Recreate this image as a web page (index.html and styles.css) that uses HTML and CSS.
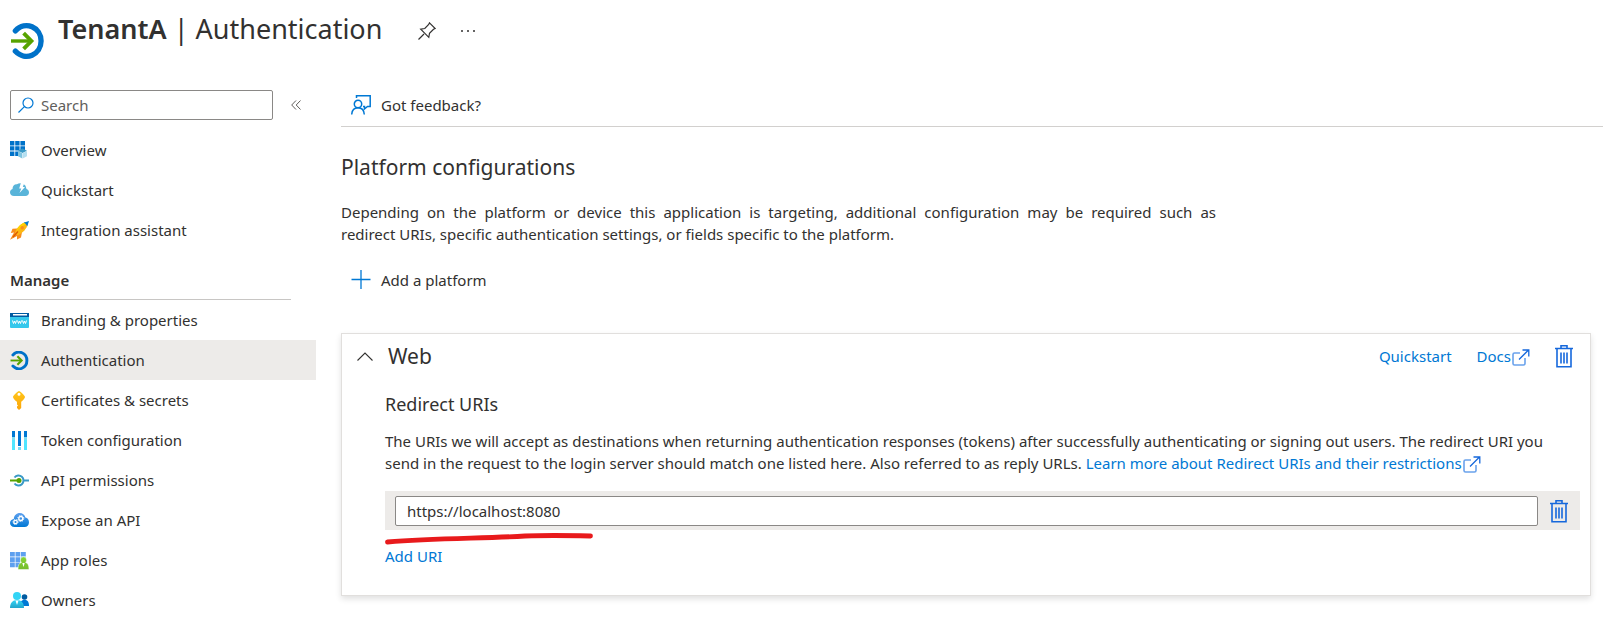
FILE: index.html
```html
<!DOCTYPE html>
<html lang="en">
<head>
<meta charset="utf-8">
<meta name="viewport" content="width=device-width, initial-scale=1">
<title>TenantA | Authentication</title>
<link rel="stylesheet" href="styles.css">
</head>
<body>
<svg class="defs" aria-hidden="true">
  <defs>
    <linearGradient id="cyan" x1="0" y1="0" x2="0" y2="1"><stop offset="0" stop-color="#32d4f5"/><stop offset="1" stop-color="#22a5cb"/></linearGradient>
    <linearGradient id="cloud" x1="0" y1="0" x2="0" y2="1"><stop offset="0" stop-color="#5ea0ef"/><stop offset="1" stop-color="#0078d4"/></linearGradient>
    <linearGradient id="gold" x1="0" y1="0" x2="0" y2="1"><stop offset="0" stop-color="#ffc61a"/><stop offset="1" stop-color="#fba40a"/></linearGradient>
    <linearGradient id="lime" x1="0" y1="0" x2="0" y2="1"><stop offset="0" stop-color="#86d633"/><stop offset="1" stop-color="#76bc2d"/></linearGradient>
    <symbol id="auth" viewBox="0 0 34 36">
      <path d="M4.500 7.500C15-3.500 31 4 31 18S15 39.500 4.500 28.500" fill="none" stroke="#0072c9" stroke-width="5.500" stroke-linecap="round"/>
      <path d="M0 18H20" stroke="#57a300" stroke-width="3.500" fill="none"/>
      <path d="M13 10L21 18L13 26" stroke="#57a300" stroke-width="4" fill="none"/>
    </symbol>
    <symbol id="trash" viewBox="0 0 18 23">
      <g fill="none" stroke="#1668dc" stroke-width="1.600">
        <path d="M0 3.500H18M6 3V.8H12V3M2 4V21.800H16V4M6 7.500V18.500M9 7.500V18.500M12 7.500V18.500"/>
      </g>
    </symbol>
    <symbol id="external" viewBox="0 0 18 17">
      <path d="M8 4H2.500Q1 4 1 5.500V14.500Q1 16 2.500 16H11.500Q13 16 13 14.500V9" fill="none" stroke="#6aa2ec" stroke-width="1.600"/>
      <path d="M7 10.500L16.500 1M10.500 1H16.800V7.500" fill="none" stroke="#1668dc" stroke-width="1.300"/>
    </symbol>
  </defs>
</svg>

<header class="page-header">
  <svg class="page-icon" aria-hidden="true"><use href="#auth"/></svg>
  <h1 class="page-title"><strong>TenantA</strong> | Authentication</h1>
  <button class="icon-button pin" aria-label="Pin">
    <svg width="18" height="18" viewBox="0 0 18 18" fill="none" stroke="#323130" stroke-width="1.200" aria-hidden="true"><path d="M.5 17.500L6 12M11.500.8L17.200 6.500L15.500 7.300L11.500 11.200L10.800 15.300L2.700 7.200L6.800 6.500L10.700 2.500Z"/></svg>
  </button>
  <button class="icon-button" aria-label="More">
    <svg width="14" height="4" viewBox="0 0 14 4" fill="#323130" aria-hidden="true"><circle cx="1" cy="2" r="1"/><circle cx="7" cy="2" r="1"/><circle cx="13" cy="2" r="1"/></svg>
  </button>
</header>

<div class="layout">
  <aside class="sidebar">
    <div class="search-row">
      <label class="search">
        <svg width="16" height="16" viewBox="0 0 16 16" fill="none" stroke="#0078d4" stroke-width="1.200" aria-hidden="true"><circle cx="10" cy="6" r="5"/><path d="M6.400 9.600L.5 15.500"/></svg>
        <input class="search-input" type="search" placeholder="Search" aria-label="Search">
      </label>
      <button class="icon-button" aria-label="Collapse menu">
        <svg width="10" height="10" viewBox="0 0 10 10" fill="none" stroke="#605e5c" aria-hidden="true"><path d="M5 .5L.7 5L5 9.500M9.500.5L5.200 5L9.500 9.500"/></svg>
      </button>
    </div>
    <nav aria-label="Application">
      <a class="nav-item" href="#overview">
        <svg class="nav-icon" viewBox="0 0 19 19" aria-hidden="true"><path fill="#0072c9" d="M0 0h4.400v4.400H0zM5.200 0h4.400v4.400H5.200zM10.400 0H15v4.400h-4.600zM0 5.200h4.400v4.400H0zM5.200 5.200h4.400v4.400H5.200zM10.400 5.200H15v4.400h-4.600zM0 10.400h4.400V15H0zM5.200 10.400h4.400V15H5.200z"/><path fill="#3999c6" d="M12.500 7.500L17 9.800L12.500 12L8 9.800Z"/><path fill="#7fc4e0" d="M8 10L12.300 12.200V17.500L8 15.300Z"/><path fill="#b5dff0" d="M17 10L12.700 12.200V17.500L17 15.300Z"/></svg>
        Overview
      </a>
      <a class="nav-item" href="#quickstart">
        <svg class="nav-icon" viewBox="0 0 19 19" aria-hidden="true"><path fill="#59b4d9" d="M4 15C1.500 15 0 13.500 0 11.300C0 9.500 1 8.300 2.500 7.900C2.500 4.500 4.500 3 7 3.200C9 1.500 13.500 1.700 15.500 4.800L16.500 8C18 8.500 19 9.700 19 11.500C19 13.500 17.500 15 15.500 15Z"/><path fill="#fff" d="M11 1.500H14.500L12.800 6H15L9.500 12L11.300 7.500H9.200Z"/></svg>
        Quickstart
      </a>
      <a class="nav-item" href="#integration">
        <svg class="nav-icon" viewBox="0 0 19 19" aria-hidden="true"><path fill="#f78d1e" d="M7 7.500L2.500 7.800L.8 12L4 11.500L0 18.800L7 15L7 18.500L11 16.500L12 11Z"/><path fill="#fcb813" d="M5 11.500C7 6 11 2.500 16 1L18 3C16.500 8 13 12 7.500 14.500Z"/><path fill="#ffd400" d="M6 10C8 5.500 11 3 15.500 1L16.500 2.300Z"/><path fill="#0078d4" d="M13.500 1.800L19 0L17.200 5.500C16.500 3.500 15.500 2.500 13.500 1.800Z"/><path d="M3 16L8 10.500" stroke="#dd5900" stroke-width="1.200"/><circle cx="12.200" cy="6.800" r="1.700" fill="#f78d1e"/></svg>
        Integration assistant
      </a>
      <h2 class="nav-heading">Manage</h2>
      <a class="nav-item" href="#branding">
        <svg class="nav-icon" viewBox="0 0 19 19" aria-hidden="true"><rect y="2" width="19" height="15" rx="1" fill="#35c8ec"/><path fill="#005ba1" d="M0 2H19V6H0Z"/><path fill="#fff" d="M3 3H17V4.500H3Z"/><path fill="none" stroke="#fff" d="M2.500 9.500L3.500 12.500L4.500 10L5.500 12.500L6.500 9.500M7.500 9.500L8.500 12.500L9.500 10L10.500 12.500L11.500 9.500M12.500 9.500L13.500 12.500L14.500 10L15.500 12.500L16.500 9.500"/></svg>
        Branding &amp; properties
      </a>
      <a class="nav-item nav-item--active" href="#authentication" aria-current="page">
        <svg class="nav-icon" aria-hidden="true"><use href="#auth"/></svg>
        Authentication
      </a>
      <a class="nav-item" href="#certificates">
        <svg class="nav-icon" viewBox="0 0 19 19" aria-hidden="true"><path fill="url(#gold)" fill-rule="evenodd" d="M9 0C10 0 15 4.500 15 6C15 7.500 12 10.500 11.200 10.700V17L9 19L7 17V15.500L8 14.500L7 13.500V10.700C6 10.500 3 7.500 3 6C3 4.500 8 0 9 0ZM9 1.800A1.500 1.500 0 1 0 9 4.800A1.500 1.500 0 1 0 9 1.800Z"/></svg>
        Certificates &amp; secrets
      </a>
      <a class="nav-item" href="#token">
        <svg class="nav-icon" viewBox="0 0 19 19" aria-hidden="true"><path fill="#0078d4" d="M2 0H5V6H2zM8 0H11V15H8zM14 0H17V6H14z"/><path fill="#7adcf5" d="M2 6H5V9H2zM14 6H17V9H14zM8 16H11V19H8z"/><path fill="#50e6ff" d="M2 9H5V19H2zM14 9H17V19H14z"/></svg>
        Token configuration
      </a>
      <a class="nav-item" href="#permissions">
        <svg class="nav-icon" viewBox="0 0 19 19" aria-hidden="true"><path d="M4.500 6.500A5 5 0 1 1 4.500 12.500M14 9.500H19" fill="none" stroke="#3999c6" stroke-width="2"/><path d="M0 9.500H8" stroke="#57a300" stroke-width="2"/><circle cx="9" cy="9.500" r="2.500" fill="#57a300"/></svg>
        API permissions
      </a>
      <a class="nav-item" href="#expose">
        <svg class="nav-icon" viewBox="0 0 19 19" aria-hidden="true"><path fill="url(#cloud)" d="M4.500 16C1.800 16 0 14.300 0 12C0 9.800 1.600 8.200 3.800 8C4 4.500 6.500 2 9.800 2C12.500 2 14.600 3.600 15.400 6.500C17.600 6.900 19 8.800 19 11.200C19 14 17.200 16 14.500 16Z"/><g fill="none" stroke="#fff"><circle cx="5.500" cy="11" r="1.700" stroke-width="1.300"/><circle cx="5.500" cy="11" r="2.500" stroke-dasharray="1 1"/><circle cx="10.800" cy="7.500" r="2" stroke-width="1.400"/><circle cx="10.800" cy="7.500" r="3" stroke-dasharray="1.200 1.200"/></g></svg>
        Expose an API
      </a>
      <a class="nav-item" href="#roles">
        <svg class="nav-icon" viewBox="0 0 19 19" aria-hidden="true"><path fill="#5ea0ef" d="M0 1h4.800v4.600H0zM5.500 1h4.800v4.600H5.500zM11 1h4.800v4.600H11zM0 6.300h4.800v4.600H0zM5.500 6.300h4.800v4.600H5.500zM11 6.300h4.800v4.600H11zM0 11.600h4.800v4.600H0zM5.500 11.600h4.800v4.600H5.500z"/><path fill="url(#lime)" stroke="#fff" stroke-width=".5" d="M13.500 5.800A3.300 3.300 0 0 1 15.600 11.500C18 12 19 14.500 19 18.500H8C8 14.500 9 12 11.400 11.500A3.300 3.300 0 0 1 13.500 5.800Z"/><path fill="#fff" d="M12.300 12H14.700L13.500 16Z"/></svg>
        App roles
      </a>
      <a class="nav-item" href="#owners">
        <svg class="nav-icon" viewBox="0 0 19 19" aria-hidden="true"><circle cx="14.500" cy="6" r="2.800" fill="#005ba1"/><path fill="#0078d4" d="M10 15C10 11 11.500 8.800 14.500 8.800S19 11 19 15Z"/><circle cx="7" cy="5" r="4" fill="#32d4f5"/><path fill="url(#cyan)" d="M0 17C0 12 2.500 9 7 9S14 12 14 17Z"/><path fill="#fff" d="M5.500 9.500H8.500L7 14Z"/></svg>
        Owners
      </a>
    </nav>
  </aside>

  <main class="main">
    <div class="toolbar">
      <button class="command">
        <svg width="20" height="20" viewBox="0 0 20 20" fill="none" stroke="#0078d4" stroke-width="1.500" aria-hidden="true"><circle cx="7" cy="9" r="3.700"/><path d="M.7 19.500C1 15 3.500 12.800 7 12.800S13 15 13.300 19.500M5.500 3V.8H19.200V11.500H16.500L13.500 14V11.500H12"/></svg>
        Got feedback?
      </button>
    </div>

    <h2 class="section-title">Platform configurations</h2>
    <p class="intro">Depending on the platform or device this application is targeting, additional configuration may be required such as redirect&nbsp;URIs, specific authentication settings, or fields specific to the platform.</p>
    <button class="command">
      <svg width="20" height="20" viewBox="0 0 20 20" stroke="#0078d4" stroke-width="1.300" aria-hidden="true"><path d="M.5 9.500H19.500M10 0V19"/></svg>
      Add a platform
    </button>

    <section class="card">
      <div class="card-header">
        <button class="icon-button" aria-label="Collapse Web">
          <svg width="16" height="9" viewBox="0 0 16 9" fill="none" stroke="#323130" stroke-width="1.100" aria-hidden="true"><path d="M.5 8.500L8 1L15.500 8.500"/></svg>
        </button>
        <h2 class="card-title">Web</h2>
        <a class="link" href="#quickstart-docs">Quickstart</a>
        <a class="link" href="#docs">Docs<svg class="external" aria-hidden="true"><use href="#external"/></svg></a>
        <button class="icon-button" aria-label="Delete platform"><svg class="trash" aria-hidden="true"><use href="#trash"/></svg></button>
      </div>
      <div class="card-body">
        <h3 class="card-subtitle">Redirect URIs</h3>
        <p class="description">The URIs we will accept as destinations when returning authentication responses (tokens) after successfully authenticating or signing out users. The redirect URI you send in the request to the login server should match one listed here. Also referred to as reply URLs. <a class="link" href="#learn">Learn more about Redirect URIs and their restrictions<svg class="external" aria-hidden="true"><use href="#external"/></svg></a></p>
        <div class="uri-row">
          <input class="uri-input" type="text" value="https://localhost:8080" aria-label="Redirect URI">
          <button class="icon-button" aria-label="Delete URI"><svg class="trash" aria-hidden="true"><use href="#trash"/></svg></button>
          <svg class="marker" viewBox="0 0 208 14" aria-hidden="true"><path d="M2.500 10C50 6 100 6.500 140 4C165 3 185 3.500 205.500 4" fill="none" stroke="#e81a1c" stroke-width="4.800" stroke-linecap="round"/></svg>
        </div>
        <a class="link" href="#add-uri">Add URI</a>
      </div>
    </section>
  </main>
</div>
</body>
</html>
```
FILE: styles.css
```css
* {
  box-sizing: border-box;
}

body {
  margin: 0;
  background: #fff;
  color: #323130;
  font: 15px/22px "Noto Sans", "Segoe UI", sans-serif;
}

h1, h2, h3, p {
  margin: 0;
  font-weight: 400;
}

svg {
  flex: none;
}

button, input {
  color: inherit;
  font: inherit;
}

button {
  padding: 0;
  border: 0;
  background: none;
  cursor: pointer;
}

.defs {
  position: absolute;
  width: 0;
  height: 0;
}

.icon-button {
  display: flex;
}

.link {
  color: #0078d4;
  text-decoration: none;
}

.page-header {
  display: flex;
  align-items: center;
  height: 62px;
  padding-left: 11px;
}

.page-icon {
  width: 33px;
  height: 36px;
  margin: 20px 14px 0 0;
}

.page-title {
  padding-bottom: 4px;
  font-size: 27px;
  line-height: 56px;
}

.page-title strong {
  font-weight: 600;
}

.pin {
  margin: 0 25px 0 36px;
}

.layout {
  display: flex;
  padding-top: 28px;
}

.sidebar {
  flex: none;
  width: 316px;
}

.search-row {
  display: flex;
  align-items: center;
  gap: 18px;
  padding: 0 15px 10px 10px;
}

.search {
  display: flex;
  flex: 1;
  align-items: center;
  gap: 7px;
  height: 30px;
  padding: 0 7px;
  border: 1px solid #8a8886;
  border-radius: 2px;
}

.search-input {
  flex: 1;
  min-width: 0;
  padding: 0;
  border: 0;
  outline: 0;
}

.search-input::placeholder {
  color: #605e5c;
}

.nav-item {
  display: flex;
  align-items: center;
  gap: 12px;
  height: 40px;
  padding-left: 10px;
  color: inherit;
  text-decoration: none;
}

.nav-item--active {
  background: #edebe9;
}

.nav-icon {
  width: 19px;
  height: 19px;
}

.nav-heading {
  height: 50px;
  margin: 0 25px 0 10px;
  padding-top: 19px;
  border-bottom: 1px solid #c8c6c4;
  font-size: 15px;
  font-weight: 600;
}

.main {
  flex: 1;
  min-width: 0;
  padding-left: 25px;
}

.toolbar {
  height: 37px;
  padding-top: 4px;
  border-bottom: 1px solid #d2d0ce;
}

.command {
  display: flex;
  align-items: center;
  gap: 10px;
  padding-left: 10px;
}

.section-title {
  padding: 25px 0 19px;
  font-size: 21px;
  line-height: 30px;
}

.intro {
  max-width: 875px;
  margin-bottom: 24px;
  text-align: justify;
}

.card {
  margin: 42px 12px 0 0;
  padding-bottom: 28px;
  border: 1px solid #e1dfdd;
  box-shadow: 0 3px 6px rgba(0, 0, 0, 0.12);
}

.card-header {
  display: flex;
  align-items: center;
  gap: 25px;
  height: 44px;
  padding: 0 17px 0 15px;
}

.card-title {
  flex: 1;
  margin-left: -10px;
  font-size: 21px;
  line-height: 30px;
}

.external {
  width: 18px;
  height: 17px;
  margin-left: 1px;
  vertical-align: -4px;
}

.trash {
  width: 18px;
  height: 23px;
}

.card-body {
  padding: 12px 10px 0 43px;
}

.card-subtitle {
  margin-bottom: 12px;
  font-size: 18px;
  line-height: 28px;
}

.description {
  margin-bottom: 17px;
}

.uri-row {
  position: relative;
  display: flex;
  align-items: center;
  gap: 12px;
  margin-bottom: 15px;
  padding: 5px 12px 4px 10px;
  background: #edebe9;
}

.uri-input {
  flex: 1;
  min-width: 0;
  height: 30px;
  padding: 0 11px;
  border: 1px solid #8a8886;
  border-radius: 2px;
  background: #fff;
}

.marker {
  position: absolute;
  top: 100%;
  left: 0;
  width: 208px;
  height: 14px;
  margin-top: 2px;
}
```
